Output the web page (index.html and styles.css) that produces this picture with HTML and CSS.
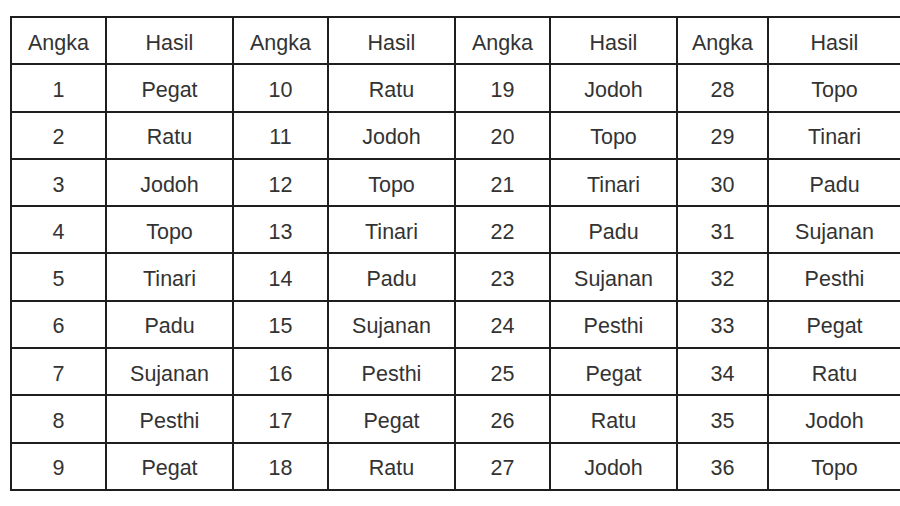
FILE: index.html
```html
<!DOCTYPE html>
<html>
<head>
<meta charset="utf-8">
<link rel="stylesheet" href="styles.css">
</head>
<body>
<table class="neptu">
  <colgroup>
    <col class="c-num"><col class="c-res">
    <col class="c-num"><col class="c-res">
    <col class="c-num"><col class="c-res">
    <col class="c-num2"><col class="c-res2">
  </colgroup>
  <thead>
    <tr><th>Angka</th><th>Hasil</th><th>Angka</th><th>Hasil</th><th>Angka</th><th>Hasil</th><th>Angka</th><th>Hasil</th></tr>
  </thead>
  <tbody>
    <tr><td>1</td><td>Pegat</td><td>10</td><td>Ratu</td><td>19</td><td>Jodoh</td><td>28</td><td>Topo</td></tr>
    <tr><td>2</td><td>Ratu</td><td>11</td><td>Jodoh</td><td>20</td><td>Topo</td><td>29</td><td>Tinari</td></tr>
    <tr><td>3</td><td>Jodoh</td><td>12</td><td>Topo</td><td>21</td><td>Tinari</td><td>30</td><td>Padu</td></tr>
    <tr><td>4</td><td>Topo</td><td>13</td><td>Tinari</td><td>22</td><td>Padu</td><td>31</td><td>Sujanan</td></tr>
    <tr><td>5</td><td>Tinari</td><td>14</td><td>Padu</td><td>23</td><td>Sujanan</td><td>32</td><td>Pesthi</td></tr>
    <tr><td>6</td><td>Padu</td><td>15</td><td>Sujanan</td><td>24</td><td>Pesthi</td><td>33</td><td>Pegat</td></tr>
    <tr><td>7</td><td>Sujanan</td><td>16</td><td>Pesthi</td><td>25</td><td>Pegat</td><td>34</td><td>Ratu</td></tr>
    <tr><td>8</td><td>Pesthi</td><td>17</td><td>Pegat</td><td>26</td><td>Ratu</td><td>35</td><td>Jodoh</td></tr>
    <tr><td>9</td><td>Pegat</td><td>18</td><td>Ratu</td><td>27</td><td>Jodoh</td><td>36</td><td>Topo</td></tr>
  </tbody>
</table>
</body>
</html>
```
FILE: styles.css
```css
html, body {
  margin: 0;
  padding: 0;
  background: #ffffff;
}
body {
  padding: 16px 0 0 10px;
  font-family: "Liberation Sans", Arial, sans-serif;
  overflow: hidden;
}
.neptu {
  border-collapse: collapse;
  table-layout: fixed;
  width: 890px;
  color: #333;
  font-size: 21.5px;
}
.c-num { width: 95px; }
.c-res { width: 127px; }
.c-num2 { width: 91px; }
.c-res2 { width: 133px; }
.neptu th,
.neptu td {
  border: 2px solid #1e1e1e;
  height: 47.3px;
  padding: 5px 0 0 0;
  text-align: center;
  vertical-align: middle;
  font-weight: normal;
  box-sizing: border-box;
}
```
